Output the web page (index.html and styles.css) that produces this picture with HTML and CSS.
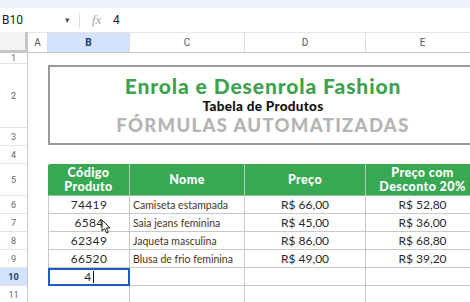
FILE: index.html
```html
<!DOCTYPE html>
<html>
<head>
    <title>Enrola e Desenrola Fashion</title>
    <link rel="stylesheet" href="styles.css">
</head>
<body>
    <div class="topstrip"></div>
    <div class="formulabar">
        <span class="namebox">B10</span>
        <span class="drop">&#9662;</span>
        <span class="divider"></span>
        <span class="fx">fx</span>
        <span class="value">4</span>
    </div>

    <div class="sheet">
        <div class="corner"></div>
        <div class="colhead">A</div>
        <div class="colhead active">B</div>
        <div class="colhead">C</div>
        <div class="colhead">D</div>
        <div class="colhead">E</div>

        <div class="rowhead">1</div>
        <div></div><div></div><div></div><div></div><div></div>

        <div class="rowhead">2</div>
        <div></div>
        <div class="titlebox">
            <div class="title">Enrola e Desenrola Fashion</div>
            <div class="subtitle">Tabela de Produtos</div>
            <div class="formulas">FÓRMULAS AUTOMATIZADAS</div>
        </div>

        <div class="rowhead">3</div>
        <div></div>

        <div class="rowhead">4</div>
        <div></div><div></div><div></div><div></div><div></div>

        <div class="rowhead">5</div>
        <div></div>
        <div class="th first">Código<br>Produto</div>
        <div class="th">Nome</div>
        <div class="th">Preço</div>
        <div class="th">Preço com<br>Desconto 20%</div>

        <div class="rowhead">6</div>
        <div></div>
        <div class="td code">74419</div>
        <div class="td name">Camiseta estampada</div>
        <div class="td price">R$ 66,00</div>
        <div class="td price">R$ 52,80</div>

        <div class="rowhead">7</div>
        <div></div>
        <div class="td code">6584<svg class="pointer" width="11" height="15" viewBox="0 0 11 15"><path d="M1 1 L1 12 L3.6 9.6 L5.6 14 L7.4 13.2 L5.4 8.9 L9 8.9 Z" fill="#fff" stroke="#222" stroke-width="1" stroke-linejoin="round"/></svg></div>
        <div class="td name">Saia jeans feminina</div>
        <div class="td price">R$ 45,00</div>
        <div class="td price">R$ 36,00</div>

        <div class="rowhead">8</div>
        <div></div>
        <div class="td code">62349</div>
        <div class="td name">Jaqueta masculina</div>
        <div class="td price">R$ 86,00</div>
        <div class="td price">R$ 68,80</div>

        <div class="rowhead">9</div>
        <div></div>
        <div class="td code">66520</div>
        <div class="td name">Blusa de frio feminina</div>
        <div class="td price">R$ 49,00</div>
        <div class="td price">R$ 39,20</div>

        <div class="rowhead active">10</div>
        <div></div>
        <div class="td code selected"><span class="caret">4</span></div>
        <div class="td"></div>
        <div class="td"></div>
        <div class="td"></div>

        <div class="rowhead">11</div>
        <div></div>
        <div class="td"></div>
        <div class="td"></div>
        <div class="td"></div>
        <div class="td"></div>
    </div>
</body>
</html>
```

FILE: styles.css
```css
html, body {
    margin: 0;
    padding: 0;
}

body {
    width: 470px;
    height: 302px;
    overflow: hidden;
    background: #fff;
    font-family: Lato, "Open Sans", sans-serif;
    color: #222;
}

.topstrip {
    height: 8px;
    background: #eef2f8;
}

.formulabar {
    height: 24px;
    display: flex;
    align-items: center;
    font-family: Roboto, "Noto Sans", sans-serif;
    font-size: 12px;
    color: #222;
}

.namebox {
    width: 63px;
    padding-left: 2px;
}

.drop {
    font-size: 9px;
    color: #555;
    width: 14px;
}

.divider {
    width: 1px;
    height: 15px;
    background: #dadce0;
    margin-right: 12px;
}

.fx {
    font-family: "Liberation Serif", serif;
    font-style: italic;
    color: #aaa;
    font-size: 13px;
    width: 21px;
}

.sheet {
    display: grid;
    grid-template-columns: 28px 20px 82px 115px 121px 114px;
    grid-template-rows: 21px 11px 64px 18px 18px 32px 18px 18px 18px 18px 18px 18px;
}

.corner {
    background: #f1f3f4;
    border-right: 3px solid #c6c6c6;
    border-bottom: 3px solid #c6c6c6;
    box-sizing: border-box;
}

.colhead {
    display: flex;
    align-items: center;
    justify-content: center;
    font-family: Roboto, "Noto Sans", sans-serif;
    font-size: 10px;
    color: #555;
    border-right: 1px solid #dcdcdc;
    border-bottom: 1px solid #c6c6c6;
    border-top: 1px solid #e6e6e6;
    box-sizing: border-box;
}

.colhead.active {
    background: #d3e3fd;
    color: #0b3a7a;
    font-weight: bold;
}

.rowhead {
    display: flex;
    align-items: center;
    justify-content: center;
    font-family: Roboto, "Noto Sans", sans-serif;
    font-size: 9px;
    color: #666;
    border-right: 1px solid #c6c6c6;
    border-bottom: 1px solid #e2e2e2;
    box-sizing: border-box;
}

.rowhead.active {
    background: #d3e3fd;
    color: #0b3a7a;
    font-weight: bold;
}

.titlebox {
    grid-column: 3 / span 4;
    grid-row: span 2;
    margin-top: 1px;
    margin-bottom: 1px;
    border: 2px solid #9a9a9a;
    border-right: none;
    display: flex;
    flex-direction: column;
    align-items: center;
    padding-top: 6px;
    padding-right: 4px;
}

.title {
    font-size: 21px;
    font-weight: 900;
    color: #3fa24f;
    line-height: 25px;
    letter-spacing: 0.9px;
}

.subtitle {
    font-size: 13.5px;
    font-weight: 900;
    color: #111;
    line-height: 16px;
    letter-spacing: 0.3px;
}

.formulas {
    font-size: 18.5px;
    font-weight: 900;
    color: #b4b4b4;
    line-height: 22px;
    letter-spacing: 1.3px;
}

.th {
    background: #38a852;
    color: #fff;
    font-weight: 900;
    font-size: 12.5px;
    line-height: 14px;
    letter-spacing: 0.4px;
    text-align: center;
    display: flex;
    align-items: center;
    justify-content: center;
    border-right: 1px solid #a8d6b2;
    border-bottom: 1px solid #8fbf98;
}

.th.first {
    border-radius: 2px 0 0 0;
}

.td {
    display: flex;
    align-items: center;
    border-right: 1px solid #c8c8c8;
    border-bottom: 1px solid #c8c8c8;
    box-sizing: border-box;
    font-size: 12px;
    color: #2a2a2a;
    position: relative;
}

.td.code {
    justify-content: center;
    border-left: 1px solid #c8c8c8;
    font-size: 12px;
    letter-spacing: 0.3px;
}

.td.name {
    padding-left: 3px;
    font-size: 10.5px;
    color: #4a3420;
}

.td.price {
    justify-content: center;
}

.td.selected {
    border: 2px solid #1f5bc4;
}

.caret {
    border-right: 1px solid #111;
    padding-right: 1px;
    line-height: 12px;
}

.pointer {
    position: absolute;
    left: 52px;
    top: 5px;
}
```
